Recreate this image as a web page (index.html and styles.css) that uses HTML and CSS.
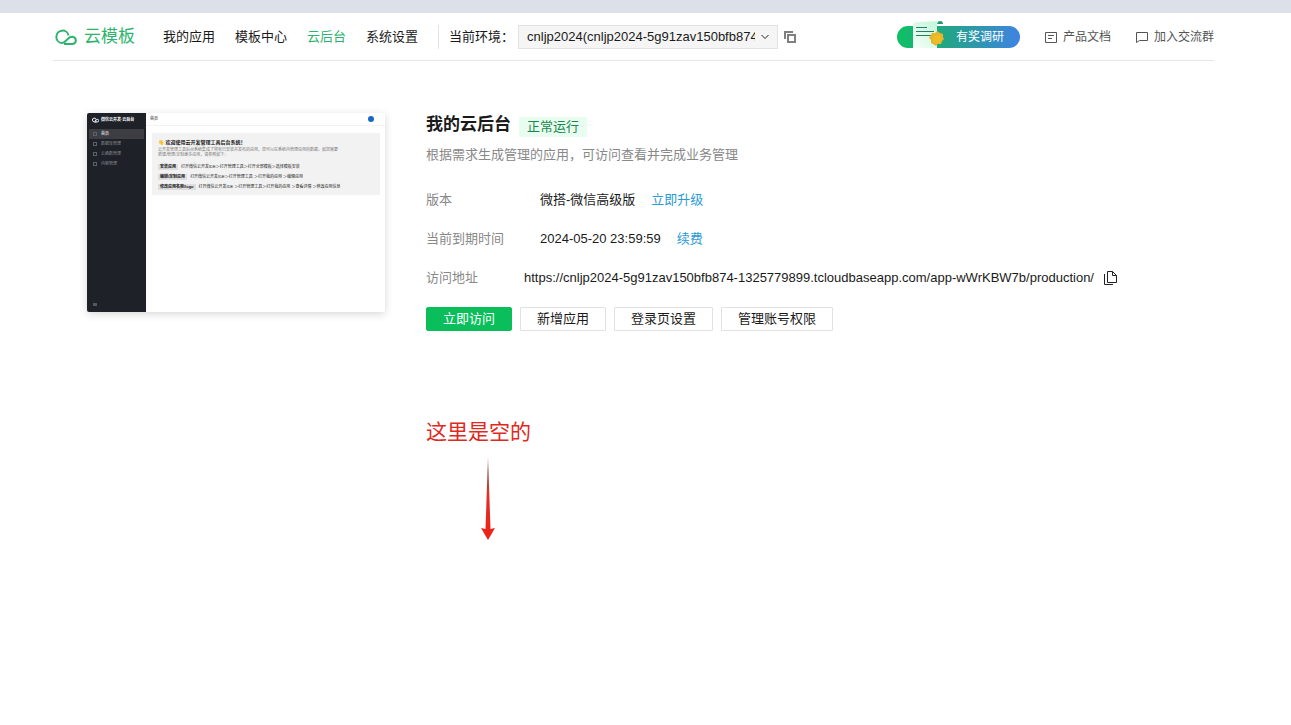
FILE: index.html
```html
<!DOCTYPE html>
<html lang="zh-CN">
<head>
    <meta charset="UTF-8">
    <meta name="viewport" content="width=device-width, initial-scale=1.0">
    <title>云模板 - 云后台</title>
    <link rel="stylesheet" href="styles.css">
</head>
<body>
    <div class="top-strip"></div>
    <div class="page">
        <header class="header">
            <a href="#" class="logo">
                <svg class="logo-icon" viewBox="0 0 22 18">
                    <path d="M10 13.500 Q8.500 15 7 15 A6.200 6.200 0 1 1 13.600 7.500"/>
                    <path d="M9 16 H17 A3.600 3.600 0 0 0 17.500 8.800 Q15 8.600 13 10.700 L9.500 14"/>
                </svg>
                <span>云模板</span>
            </a>
            <nav class="nav">
                <a href="#">我的应用</a>
                <a href="#">模板中心</a>
                <a href="#" class="active">云后台</a>
                <a href="#">系统设置</a>
            </nav>
            <div class="env">
                <label for="env">当前环境：</label>
                <span class="select-wrap">
                    <select id="env">
                        <option>cnljp2024(cnljp2024-5g91zav150bfb874)</option>
                    </select>
                    <svg class="chevron" viewBox="0 0 8 6"><path d="M0.500 1 L4 4.500 L7.500 1"/></svg>
                </span>
                <button class="icon-button" aria-label="复制环境">
                    <svg class="copy-icon" viewBox="0 0 12 12"><path d="M1 8 V1 H9"/><path d="M4 4 H11 V11 H4 Z"/></svg>
                </button>
            </div>
            <div class="links">
                <a href="#" class="survey">
                    <svg class="survey-art" viewBox="0 0 32 28">
                        <defs>
                            <linearGradient id="paper" x1="0" y1="1" x2="1" y2="0">
                                <stop offset="0" stop-color="#f6fffa"/>
                                <stop offset="1" stop-color="#bff5d6"/>
                            </linearGradient>
                        </defs>
                        <path d="M1 28 V6 Q1 2 6 2 L28 1 Q25 2 25 6 V28 Z" fill="url(#paper)"/>
                        <path d="M25 4 Q26 1 28 1 Q31 1 31 4 Z" fill="#23966f"/>
                        <path d="M4 7.500 H15 M4 11.500 H22 M4 15.500 H19" stroke="#217f68" fill="none"/>
                        <path d="M25 11 L28 13 L31 14 L31 17 L32 19 L30 21 L29 24 L26 24 L24 26 L21 24 L19 23 L19 20 L17 18 L19 15 L20 13 L23 13 Z" fill="#e5b52d"/>
                        <circle cx="25" cy="19" r="4" fill="#eebc24"/>
                    </svg>
                    <span>有奖调研</span>
                </a>
                <a href="#" class="link">
                    <svg class="link-icon" viewBox="0 0 12 12"><path d="M0.500 1.500 H11.500 V11.500 H0.500 Z M3 4.500 H9 M3 7.500 H7"/></svg>
                    <span>产品文档</span>
                </a>
                <a href="#" class="link">
                    <svg class="link-icon" viewBox="0 0 12 12"><path d="M0.500 1.500 H11.500 V9.500 H3.500 L0.500 11.500 Z"/></svg>
                    <span>加入交流群</span>
                </a>
            </div>
        </header>

        <main class="main">
            <div class="preview">
                <div class="preview-side">
                    <div class="preview-brand">
                        <svg class="preview-logo" viewBox="0 0 22 18"><path d="M14 15 H7 A6 6 0 1 1 13 7 L9 13 M9 15 H17 A4 4 0 0 0 17 7 L12 10"/></svg>
                        <span>微信云开发·云后台</span>
                    </div>
                    <ul class="preview-menu">
                        <li class="current">首页</li>
                        <li>数据库管理</li>
                        <li>云函数管理</li>
                        <li>内容管理</li>
                    </ul>
                    <div class="preview-fold"></div>
                </div>
                <div class="preview-body">
                    <div class="preview-top">
                        <span>首页</span>
                        <span class="preview-user"></span>
                    </div>
                    <div class="preview-card">
                        <p class="preview-title">👋 欢迎使用云开发管理工具后台系统！</p>
                        <p class="preview-text">云开发管理工具后台系统集成了所有已安装并发布的应用，您可以在系统内管理应用的数据。如您需要<br>新建/管理/定制更多应用，请参照如下：</p>
                        <p class="preview-step"><b>安装应用</b>打开微信云开发IDE＞打开管理工具＞打开全部模板＞选择模板安装</p>
                        <p class="preview-step"><b>编辑/定制应用</b>打开微信云开发IDE＞打开管理工具 ＞打开我的应用 ＞编辑应用</p>
                        <p class="preview-step"><b>修改应用名称/logo</b>打开微信云开发IDE ＞打开管理工具＞打开我的应用 ＞查看详情 ＞修改应用信息</p>
                    </div>
                </div>
            </div>

            <section class="info">
                <div class="title-row">
                    <h1>我的云后台</h1>
                    <span class="tag">正常运行</span>
                </div>
                <p class="desc">根据需求生成管理的应用，可访问查看并完成业务管理</p>
                <dl class="details">
                    <div class="row">
                        <dt>版本</dt>
                        <dd>微搭-微信高级版<a href="#">立即升级</a></dd>
                    </div>
                    <div class="row">
                        <dt>当前到期时间</dt>
                        <dd>2024-05-20 23:59:59<a href="#">续费</a></dd>
                    </div>
                    <div class="row row-url">
                        <dt>访问地址</dt>
                        <dd>
                            https://cnljp2024-5g91zav150bfb874-1325779899.tcloudbaseapp.com/app-wWrKBW7b/production/
                            <button class="icon-button" aria-label="复制地址">
                                <svg class="file-icon" viewBox="0 0 13 14"><path d="M3.500 0.500 H8.500 L12.500 4.500 V11.500 H3.500 Z M8.500 0.500 V4.500 H12.500 M0.500 3 V13.500 H9"/></svg>
                            </button>
                        </dd>
                    </div>
                </dl>
                <div class="actions">
                    <button class="btn primary">立即访问</button>
                    <button class="btn">新增应用</button>
                    <button class="btn">登录页设置</button>
                    <button class="btn">管理账号权限</button>
                </div>
                <div class="note">
                    <p>这里是空的</p>
                    <svg class="arrow" viewBox="0 0 14 84">
                        <defs>
                            <linearGradient id="fade" x1="0" y1="0" x2="0" y2="1">
                                <stop offset="0" stop-color="#c9a6a4"/>
                                <stop offset="0.150" stop-color="#96504c"/>
                                <stop offset="0.450" stop-color="#df3027"/>
                                <stop offset="1" stop-color="#ee2218"/>
                            </linearGradient>
                        </defs>
                        <path d="M7 0 L9.500 73 L14 72 L7 84 L0 72 L4.500 73 Z" fill="url(#fade)"/>
                    </svg>
                </div>
            </section>
        </main>
    </div>
</body>
</html>
```

FILE: styles.css
```css
*, *::before {
    box-sizing: border-box;
}
body {
    margin: 0;
    font-family: "Liberation Sans", "Noto Sans CJK SC", sans-serif;
    font-size: 13px;
    line-height: 20px;
    color: #1a1a1a;
    background-color: #fff;
}
a {
    color: inherit;
    text-decoration: none;
}
h1, p, dl, dd, ul {
    margin: 0;
    padding: 0;
}
button, select {
    font: inherit;
    color: inherit;
}
svg {
    display: block;
    fill: none;
}
.top-strip {
    height: 13px;
    background-color: #dde0e8;
}
.page {
    margin: 0 77px 0 53px;
}

/* header */
.header {
    display: flex;
    align-items: center;
    height: 48px;
    border-bottom: 1px solid #e4e5e7;
    white-space: nowrap;
}
.logo {
    display: flex;
    align-items: center;
    gap: 7px;
    margin-left: 2px;
    font-size: 17px;
    color: #2db36d;
}
.logo-icon {
    width: 22px;
    height: 18px;
    stroke: #2db36d;
    stroke-width: 2;
}
.nav {
    display: flex;
    gap: 20px;
    margin-left: 28px;
}
.nav .active {
    color: #2db36d;
}
.env {
    display: flex;
    align-items: center;
    height: 24px;
    margin-left: 20px;
    padding-left: 10px;
    border-left: 1px solid #e4e5e7;
}
.select-wrap {
    position: relative;
    margin-left: 4px;
}
.env select {
    display: block;
    appearance: none;
    width: 260px;
    height: 24px;
    padding: 0 22px 0 8px;
    border: 1px solid #e2e3e5;
    border-radius: 0;
    background-color: #f5f5f5;
}
.chevron {
    position: absolute;
    top: 9px;
    right: 9px;
    width: 8px;
    height: 6px;
    stroke: #222;
    stroke-width: 1;
    pointer-events: none;
}
.icon-button {
    padding: 0;
    border: none;
    background: none;
    cursor: pointer;
}
.copy-icon {
    width: 12px;
    height: 12px;
    margin-left: 6px;
    stroke: #808080;
    stroke-width: 2;
}
.links {
    display: flex;
    align-items: center;
    gap: 25px;
    margin-left: auto;
    font-size: 12px;
    color: #555;
}
.survey {
    position: relative;
    height: 22px;
    padding: 0 16px 0 59px;
    border-radius: 11px;
    background: linear-gradient(90deg, #0fc064 0%, #22a586 40%, #3f83e3 100%);
    line-height: 22px;
    color: #fff;
}
.survey-art {
    position: absolute;
    left: 15px;
    bottom: 0;
    width: 32px;
    height: 28px;
}
.link {
    display: flex;
    align-items: center;
    gap: 6px;
}
.link-icon {
    width: 12px;
    height: 12px;
    stroke: #555;
}

/* content */
.main {
    display: flex;
    align-items: flex-start;
    gap: 41px;
    padding: 52px 0 0 34px;
}

/* backend preview */
.preview {
    display: flex;
    flex: none;
    width: 298px;
    height: 199px;
    border-radius: 2px;
    background-color: #fff;
    box-shadow: 0 2px 8px rgba(0,0,0,0.16);
    overflow: hidden;
    line-height: 6px;
}
.preview-side {
    display: flex;
    flex-direction: column;
    width: 59px;
    padding: 4px 2px;
    background-color: #1e2128;
    color: #8b8d92;
    font-size: 4px;
}
.preview-brand {
    display: flex;
    align-items: center;
    gap: 2px;
    padding-left: 3px;
    color: #fff;
    font-weight: bold;
}
.preview-logo {
    width: 7px;
    height: 6px;
    stroke: #fff;
    stroke-width: 3;
}
.preview-menu {
    margin-top: 6px;
    list-style: none;
}
.preview-menu li {
    display: flex;
    align-items: center;
    gap: 4px;
    height: 10px;
    padding-left: 4px;
}
.preview-menu li::before {
    content: "";
    width: 4px;
    height: 4px;
    border: 1px solid #5d6067;
}
.preview-menu .current {
    background-color: #3c3e43;
    color: #fff;
}
.preview-fold {
    width: 4px;
    height: 3px;
    margin: auto 0 2px 4px;
    background-color: #55575e;
}
.preview-body {
    flex: 1;
}
.preview-top {
    display: flex;
    align-items: center;
    justify-content: space-between;
    height: 13px;
    padding: 0 11px 0 4px;
    border-bottom: 1px solid #f3f3f3;
    font-size: 4px;
}
.preview-user {
    width: 6px;
    height: 6px;
    border-radius: 50%;
    background-color: #1767c5;
}
.preview-card {
    height: 62px;
    margin: 7px 5px 0 6px;
    padding: 5px 6px;
    background-color: #f2f2f2;
    font-size: 4px;
    white-space: nowrap;
}
.preview-title {
    margin-bottom: 1px;
    font-size: 5px;
    line-height: 8px;
    font-weight: bold;
}
.preview-text {
    margin-bottom: 7px;
    line-height: 5px;
    color: #777;
}
.preview-step {
    margin-bottom: 4px;
}
.preview-step b {
    display: inline-block;
    margin-right: 3px;
    padding: 0 2px;
    background-color: #dedede;
}

/* app info */
.info {
    flex: 1;
    min-width: 0;
}
.title-row {
    display: flex;
    align-items: center;
    gap: 8px;
}
h1 {
    font-size: 17px;
    line-height: 24px;
}
.tag {
    margin-top: 4px;
    padding: 0 8px;
    background-color: #e8fcf0;
    color: #15884b;
}
.desc {
    margin-top: 8px;
    color: #888;
}
.details {
    margin-top: 25px;
}
.row {
    display: flex;
    margin-bottom: 19px;
    white-space: nowrap;
}
.row dt {
    width: 114px;
    color: #888;
}
.row dd a {
    margin-left: 16px;
    color: #2b9bd6;
}
.row-url dt {
    width: 98px;
}
.row-url dd {
    display: flex;
    align-items: center;
    gap: 10px;
}
.file-icon {
    width: 13px;
    height: 14px;
    stroke: #222;
}
.actions {
    display: flex;
    gap: 8px;
}
.btn {
    height: 24px;
    padding: 0 16px;
    border: 1px solid #e0e1e3;
    border-radius: 1px;
    background-color: #fff;
    line-height: 20px;
    cursor: pointer;
}
.btn.primary {
    border-color: #0abf5b;
    border-radius: 2px;
    background-color: #0abf5b;
    color: #fff;
}
.note {
    margin-top: 86px;
    font-size: 21px;
    line-height: 30px;
    color: #e0281e;
}
.arrow {
    width: 14px;
    height: 84px;
    margin: 9px 0 0 55px;
}
```
